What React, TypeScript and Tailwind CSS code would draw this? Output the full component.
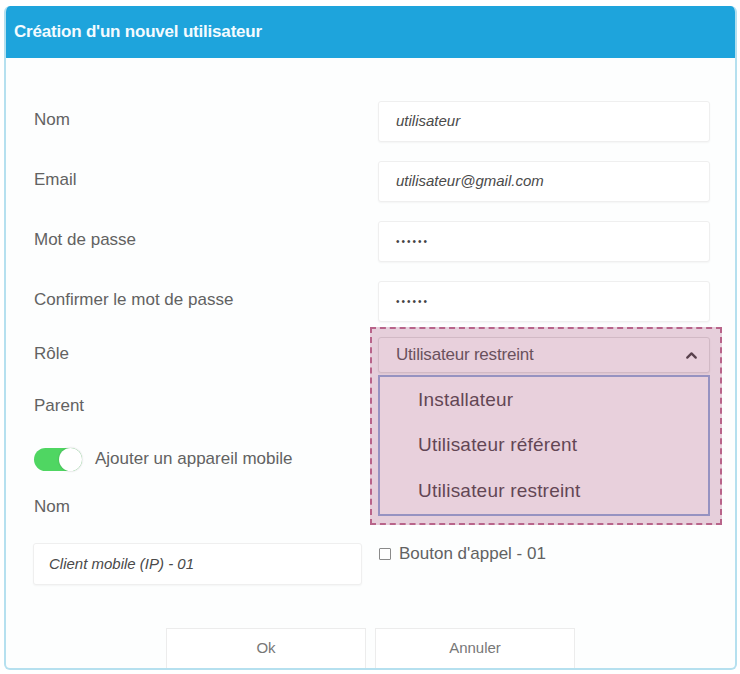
import React from 'react'
import { ChevronUp } from 'lucide-react'

const ROLES = ['Installateur', 'Utilisateur référent', 'Utilisateur restreint']

function Field({ value, italic = true, dots = false }: { value: string; italic?: boolean; dots?: boolean }) {
  return (
    <div className="h-[41px] w-full rounded-[3px] border border-[#efefef] bg-white shadow-[0_1px_2px_rgba(0,0,0,0.04)] flex items-center pl-[17px]">
      {dots ? (
        <span className="text-[10px] tracking-[2px] text-[#444]">{value}</span>
      ) : (
        <span className={`text-[15px] text-[#4a4a4a] ${italic ? 'italic' : ''}`}>{value}</span>
      )}
    </div>
  )
}

function Row({ label, children, className = '' }: { label: string; children: React.ReactNode; className?: string }) {
  return (
    <div className={`grid grid-cols-[329px_332px] gap-x-[16px] items-center ${className}`}>
      <span className="pl-[1px] text-[17px] text-[#626262] -mt-[3px]">{label}</span>
      {children}
    </div>
  )
}

export default function App() {
  return (
    <div className="w-[740px] h-[674px] bg-white pt-[6px] pl-[4px] font-['Liberation_Sans',Arial,sans-serif]">
      <div className="w-[733px] h-[664px] rounded-[6px] border-2 border-t-0 border-[#b5e0ef] overflow-hidden bg-[#fdfefe]">
        {/* header */}
        <div className="h-[52px] bg-[#1ea4dc] flex items-center pl-[8px]">
          <h1 className="text-[17px] font-bold text-[#f4fbff] tracking-[-0.2px]">Création d'un nouvel utilisateur</h1>
        </div>

        <div className="pl-[27px] pt-[43px] flex flex-col">
          <Row label="Nom">
            <Field value="utilisateur" />
          </Row>
          <Row label="Email" className="mt-[19px]">
            <Field value="utilisateur@gmail.com" />
          </Row>
          <Row label="Mot de passe" className="mt-[19px]">
            <Field value="••••••" dots />
          </Row>
          <Row label="Confirmer le mot de passe" className="mt-[19px]">
            <Field value="••••••" dots />
          </Row>

          {/* role select, opened */}
          <Row label="Rôle" className="mt-[15px]">
            <div className="relative h-[36px]">
              <div className="h-full rounded-[3px] border border-[#dedede] bg-white shadow-[0_1px_2px_rgba(0,0,0,0.08)] flex items-center justify-between pl-[17px] pr-[9px]">
                <span className="text-[17px] text-[#4a4a4a] tracking-[-0.2px]">Utilisateur restreint</span>
                <ChevronUp size={17} strokeWidth={3.2} className="text-[#333]" />
              </div>
              <ul className="absolute left-0 top-[38px] z-10 w-[332px] h-[141px] border-2 border-[#8aa7d8] bg-white flex flex-col">
                {ROLES.map((r) => (
                  <li key={r} className="h-[47px] flex items-center pl-[38px] text-[19px] text-[#3f3a3d] tracking-[0.2px]">
                    {r}
                  </li>
                ))}
              </ul>
              <div className="pointer-events-none absolute -left-[8px] -top-[10px] z-20 w-[352px] h-[198px] border-2 border-dashed border-[#b8648a] bg-[rgba(178,98,138,0.3)]" />
            </div>
          </Row>

          <Row label="Parent" className="mt-[16px]">
            <div className="h-[36px]" />
          </Row>

          {/* mobile device toggle */}
          <div className="mt-[22px] h-[24px] flex items-center gap-[13px] pl-[1px]">
            <div className="relative w-[48px] h-[23px] rounded-full bg-[#4fd662]">
              <div className="absolute right-0 top-0 w-[23px] h-[23px] rounded-full bg-white shadow-[0_0_2px_rgba(0,0,0,0.25)]" />
            </div>
            <span className="text-[17px] text-[#626262]">Ajouter un appareil mobile</span>
          </div>

          <div className="mt-[26px] h-[20px] flex items-center pl-[1px]">
            <span className="text-[17px] text-[#626262]">Nom</span>
          </div>

          <div className="mt-[26px] grid grid-cols-[329px_332px] gap-x-[16px] items-start">
            <div className="h-[42px] rounded-[3px] border border-[#efefef] bg-white shadow-[0_1px_2px_rgba(0,0,0,0.04)] flex items-center pl-[15px]">
              <span className="text-[15px] italic text-[#4a4a4a]">Client mobile (IP) - 01</span>
            </div>
            <label className="h-[20px] flex items-center gap-[8px] pl-[1px] mt-[1px]">
              <span className="w-[12px] h-[12px] border border-[#8a8a8a] rounded-[1px] bg-white" />
              <span className="text-[17px] text-[#626262]">Bouton d'appel - 01</span>
            </label>
          </div>
        </div>

        {/* footer buttons */}
        <div className="mt-[43px] flex justify-center gap-[9px]">
          <button className="w-[200px] h-[40px] border border-b-0 border-[#ececec] bg-white text-[15px] text-[#777]">Ok</button>
          <button className="w-[200px] h-[40px] border border-b-0 border-[#ececec] bg-white text-[15px] text-[#777]">Annuler</button>
        </div>
      </div>
    </div>
  )
}
